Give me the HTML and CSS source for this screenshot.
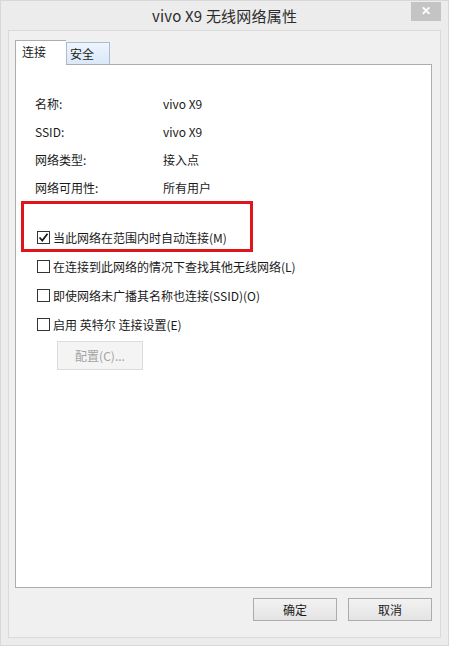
FILE: index.html
```html
<!DOCTYPE html>
<html lang="zh-CN">
<head>
  <meta charset="UTF-8">
  <meta name="viewport" content="width=device-width, initial-scale=1.0">
  <title>vivo X9 无线网络属性</title>
  <link rel="stylesheet" href="styles.css">
</head>
<body>
  <div class="window">
    <div class="titlebar">
      <span></span>
      <span class="title">vivo X9 无线网络属性</span>
      <button class="close">&#10005;</button>
    </div>

    <div class="client">
      <div class="tabs">
        <div class="tab active">连接</div>
        <div class="tab">安全</div>
      </div>

      <div class="panel">
        <div class="info">
          <div class="row"><span class="label">名称:</span><span>vivo X9</span></div>
          <div class="row"><span class="label">SSID:</span><span>vivo X9</span></div>
          <div class="row"><span class="label">网络类型:</span><span>接入点</span></div>
          <div class="row"><span class="label">网络可用性:</span><span>所有用户</span></div>
        </div>

        <!-- annotation box -->
        <div class="highlight">
          <label class="check">
            <span class="box checked">
              <svg width="11" height="11" viewBox="0 0 11 11"><path d="M1.5 5.5 L4.3 8.5 L9.5 1.8" fill="none" stroke="#1a1a1a" stroke-width="1.8"/></svg>
            </span>
            当此网络在范围内时自动连接(M)
          </label>
        </div>

        <label class="check"><span class="box"></span>在连接到此网络的情况下查找其他无线网络(L)</label>
        <label class="check"><span class="box"></span>即使网络未广播其名称也连接(SSID)(O)</label>
        <label class="check"><span class="box"></span>启用 英特尔 连接设置(E)</label>

        <button class="btn config" disabled>配置(C)...</button>
      </div>

      <div class="actions">
        <button class="btn">确定</button>
        <button class="btn">取消</button>
      </div>
    </div>
  </div>
</body>
</html>
```

FILE: styles.css
```css
*, *:before, *:after{
  padding: 0;
  margin: 0;
  box-sizing: border-box;
}
body{
  width: 449px;
  height: 646px;
  background: #ebebeb;
  font-family: "Noto Sans CJK SC", "Open Sans", sans-serif;
  font-size: 12px;
  color: #1a1a1a;
  overflow: hidden;
}
.window{
  width: 449px;
  height: 646px;
  border: 1px solid #d8d8d8;
  background: #ececec;
  display: flex;
  flex-direction: column;
}
.titlebar{
  height: 29px;
  display: grid;
  grid-template-columns: 1fr auto 1fr;
  align-items: start;
  padding: 0 7px;
}
.title{
  font-size: 15px;
  color: #2b2b2b;
  line-height: 29px;
  letter-spacing: 0.2px;
}
.close{
  justify-self: end;
  margin-top: 1px;
  width: 30px;
  height: 19px;
  border: none;
  background: #c4c4c4;
  color: #ffffff;
  font-size: 12px;
  font-weight: bold;
  line-height: 19px;
}
.client{
  flex: 1;
  margin: 0 7px 7px;
  background: #f0f0f0;
  border: 1px solid #dadada;
  padding: 9px 8px 0 6px;
  display: flex;
  flex-direction: column;
}
.tabs{
  display: flex;
  align-items: flex-end;
  height: 24px;
  position: relative;
  z-index: 1;
}
.tab{
  height: 22px;
  width: 44px;
  padding: 3px 0 0 3px;
  border: 1px solid #a9bcd3;
  border-bottom: none;
  background: linear-gradient(#edf4fc, #dbe8f7);
  line-height: 16px;
}
.tab.active{
  width: 51px;
  height: 25px;
  margin-bottom: -1px;
  padding: 3px 0 0 6px;
  background: #ffffff;
  border-color: #adadad;
  border-right: none;
}
.panel{
  width: 417px;
  height: 524px;
  background: #ffffff;
  border: 1px solid #adadad;
  padding: 24px 19px 0;
}
.row{
  height: 28px;
  display: flex;
  align-items: center;
}
.label{
  width: 128px;
}
.highlight{
  width: 232px;
  height: 51px;
  margin-left: -14px;
  border: 3px solid #e0141b;
  padding: 22px 0 0 13px;
}
.highlight .check{
  height: 22px;
  margin-left: 0;
}
.check{
  height: 29px;
  margin-left: 2px;
  display: flex;
  align-items: center;
  gap: 3px;
  white-space: nowrap;
}
.box{
  width: 13px;
  height: 13px;
  border: 1px solid #333333;
  background: #ffffff;
  display: flex;
  align-items: center;
  justify-content: center;
  flex-shrink: 0;
}
.btn{
  width: 84px;
  height: 23px;
  font-family: inherit;
  font-size: 12px;
  color: #1a1a1a;
  border: 1px solid #acacac;
  background: linear-gradient(#f2f2f2, #e4e4e4);
}
.config{
  margin: 2px 0 0 22px;
  width: 86px;
  height: 29px;
  color: #a3a3a3;
  background: #f4f4f4;
  border-color: #dcdcdc;
}
.actions{
  display: flex;
  justify-content: flex-end;
  gap: 11px;
  margin-top: 10px;
  padding-right: 0;
}
```
